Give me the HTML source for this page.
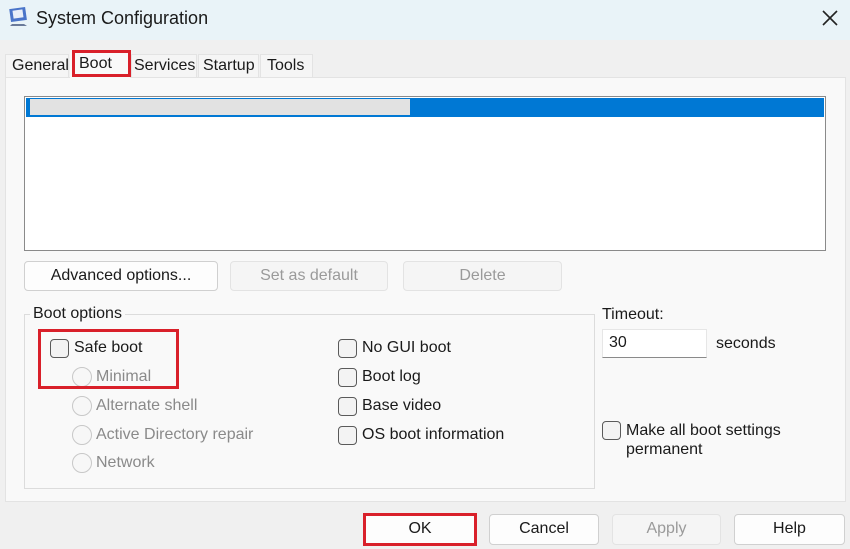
<!DOCTYPE html>
<html><head><style>
*{box-sizing:border-box;margin:0;padding:0}
body{width:850px;height:549px;background:#f0f0f0;font-family:"Liberation Sans",sans-serif;font-size:16px;color:#1a1a1a;position:relative;overflow:hidden}
.a{position:absolute}
.title{left:0;top:0;width:850px;height:40px;background:#e9f3f8}
.btn{position:absolute;background:#fdfdfd;border:1px solid #d0d0d0;border-radius:4px;text-align:center;line-height:28px;font-size:16px}
.dis{background:#f5f5f5;border-color:#e3e3e3;color:#9a9a9a}
.cb{position:absolute;width:19px;height:19px;border:1px solid #5a5a5a;border-radius:4px;background:#f3f3f3}
.rb{position:absolute;width:20px;height:20px;border:1px solid #c8c8c8;border-radius:50%;background:#f7f7f7}
.t{position:absolute;white-space:nowrap}
.g{color:#8a8a8a}
.red{position:absolute;border:3px solid #d9202a}
</style></head><body>
<div class="a title"></div>
<svg class="a" style="left:8px;top:6px" width="22" height="22" viewBox="0 0 22 22"><rect x="2" y="2" width="16" height="13" fill="#4a74c9" transform="rotate(-8 10 8)"/><rect x="5" y="4" width="10" height="8" fill="#e8eef8" transform="rotate(-8 10 8)"/><path d="M4 18h12l3 2H2z" fill="#6a7a9a"/></svg>
<div class="t" style="left:36px;top:8px;font-size:18px">System Configuration</div>
<svg class="a" style="left:821px;top:9px" width="18" height="18"><path d="M2 2L16 16M16 2L2 16" stroke="#222" stroke-width="1.6"/></svg>
<!-- tabs -->
<div class="a" style="left:5px;top:54px;width:64px;height:24px;background:#f5f5f5;border:1px solid #e3e3e3;border-bottom:none"></div>
<div class="a" style="left:131px;top:54px;width:66px;height:24px;background:#f5f5f5;border:1px solid #e3e3e3;border-bottom:none"></div>
<div class="a" style="left:198px;top:54px;width:61px;height:24px;background:#f5f5f5;border:1px solid #e3e3e3;border-bottom:none"></div>
<div class="a" style="left:260px;top:54px;width:53px;height:24px;background:#f5f5f5;border:1px solid #e3e3e3;border-bottom:none"></div>
<div class="a" style="left:5px;top:77px;width:841px;height:425px;background:#f9f9f9;border:1px solid #e3e3e3"></div>
<div class="a" style="left:70px;top:50px;width:60px;height:28px;background:#f9f9f9"></div>
<div class="t" style="left:12px;top:57px">General</div>
<div class="t" style="left:79px;top:55px">Boot</div>
<div class="t" style="left:134px;top:57px">Services</div>
<div class="t" style="left:203px;top:57px">Startup</div>
<div class="t" style="left:267px;top:57px">Tools</div>
<div class="red" style="left:72px;top:50px;width:59px;height:27px"></div>
<!-- list -->
<div class="a" style="left:24px;top:96px;width:802px;height:155px;background:#fff;border:1px solid #8a8a8a"></div>
<div class="a" style="left:26px;top:98px;width:798px;height:19px;background:#0078d4"></div>
<div class="a" style="left:30px;top:99px;width:380px;height:16px;background:#e2e2e2"></div>
<!-- buttons -->
<div class="btn" style="left:24px;top:261px;width:194px;height:30px">Advanced options...</div>
<div class="btn dis" style="left:230px;top:261px;width:158px;height:30px">Set as default</div>
<div class="btn dis" style="left:403px;top:261px;width:159px;height:30px">Delete</div>
<!-- group -->
<div class="a" style="left:24px;top:314px;width:571px;height:175px;border:1px solid #dcdcdc"></div>
<div class="t" style="left:30px;top:305px;background:#f9f9f9;padding:0 3px">Boot options</div>
<div class="cb" style="left:50px;top:339px"></div><div class="t" style="left:74px;top:339px">Safe boot</div>
<div class="rb" style="left:72px;top:367px"></div><div class="t g" style="left:96px;top:368px">Minimal</div>
<div class="rb" style="left:72px;top:396px"></div><div class="t g" style="left:96px;top:397px">Alternate shell</div>
<div class="rb" style="left:72px;top:425px"></div><div class="t g" style="left:96px;top:426px">Active Directory repair</div>
<div class="rb" style="left:72px;top:453px"></div><div class="t g" style="left:96px;top:454px">Network</div>
<div class="red" style="left:38px;top:329px;width:141px;height:60px"></div>
<div class="cb" style="left:338px;top:339px"></div><div class="t" style="left:362px;top:339px">No GUI boot</div>
<div class="cb" style="left:338px;top:368px"></div><div class="t" style="left:362px;top:368px">Boot log</div>
<div class="cb" style="left:338px;top:397px"></div><div class="t" style="left:362px;top:397px">Base video</div>
<div class="cb" style="left:338px;top:426px"></div><div class="t" style="left:362px;top:426px">OS boot information</div>
<div class="t" style="left:602px;top:306px">Timeout:</div>
<div class="a" style="left:602px;top:329px;width:105px;height:29px;background:#fff;border:1px solid #e6e6e6;border-bottom:1px solid #8a8a8a"></div>
<div class="t" style="left:609px;top:334px">30</div>
<div class="t" style="left:716px;top:335px">seconds</div>
<div class="cb" style="left:602px;top:421px"></div>
<div class="t" style="left:626px;top:421px;line-height:19px">Make all boot settings<br>permanent</div>
<!-- bottom -->
<div class="btn" style="left:363px;top:514px;width:114px;height:31px">OK</div>
<div class="red" style="left:363px;top:513px;width:114px;height:33px"></div>
<div class="btn" style="left:489px;top:514px;width:110px;height:31px">Cancel</div>
<div class="btn dis" style="left:612px;top:514px;width:109px;height:31px">Apply</div>
<div class="btn" style="left:734px;top:514px;width:111px;height:31px">Help</div>
</body></html>
